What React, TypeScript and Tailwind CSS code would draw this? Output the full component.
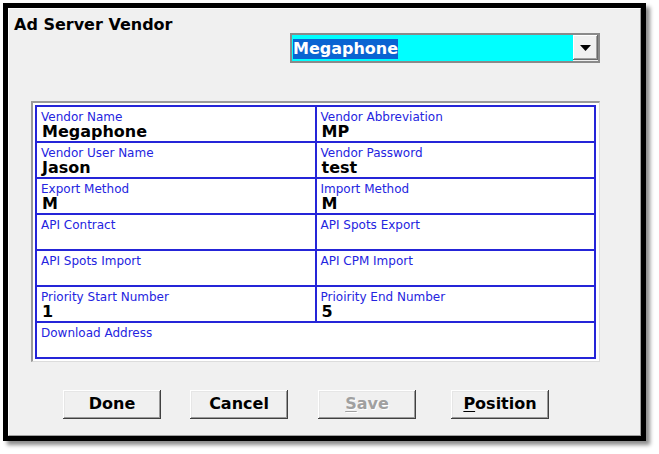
const fields: { label: string; value?: string; wide?: boolean }[] = [
  { label: 'Vendor Name', value: 'Megaphone' },
  { label: 'Vendor Abbreviation', value: 'MP' },
  { label: 'Vendor User Name', value: 'Jason' },
  { label: 'Vendor Password', value: 'test' },
  { label: 'Export Method', value: 'M' },
  { label: 'Import Method', value: 'M' },
  { label: 'API Contract' },
  { label: 'API Spots Export' },
  { label: 'API Spots Import' },
  { label: 'API CPM Import' },
  { label: 'Priority Start Number', value: '1' },
  { label: 'Prioirity End Number', value: '5' },
  { label: 'Download Address', wide: true },
];

const btn =
  "w-[98px] h-[29px] pb-[2px] flex items-center justify-center bg-[#f0f0f0] text-[16px] font-bold leading-[19px] shadow-[inset_-1px_-1px_0_#404040,inset_1px_1px_0_#ffffff,inset_-2px_-2px_0_#9a9a9a,inset_2px_2px_0_#e6e6e6]";

function Field({ label, value, wide }: { label: string; value?: string; wide?: boolean }) {
  return (
    <div className={wide ? 'col-span-2 bg-white h-[34px] pl-[4px] pt-[3px]' : 'bg-white h-[34px] pl-[4px] pt-[3px]'}>
      <div className="text-[12px] leading-[14px] text-[#2424e0]">{label}</div>
      {value && <div className="text-[16px] leading-[15px] font-bold text-black ml-[1px]">{value}</div>}
    </div>
  );
}

export default function App() {
  return (
    <div className="min-h-[454px] bg-white pt-[3px] pl-[3px] font-['DejaVu_Sans',sans-serif]">
      <div className="w-[643px] h-[438px] border-[5px] border-black shadow-[4px_4px_4px_rgba(0,0,0,0.45)]">
        <div className="h-full bg-[#f0f0f0] border-t border-l border-t-white border-l-white border-b border-r border-b-[#a0a0a0] border-r-[#a0a0a0]">
          <div className="pt-[6px] pl-[5px] text-[16px] leading-[19px] font-bold text-black">Ad Server Vendor</div>

          <div className="ml-[281px] mt-[-1px] w-[310px] h-[30px] border-2 border-[#8a8a8a] flex">
            <div className="flex-1 bg-[#00ffff] pl-[1px] pt-[2px]">
              <span className="inline-block bg-[#0a64d2] text-white text-[16px] font-bold leading-[20px]">Megaphone</span>
            </div>
            <div className="w-[25px] h-[25px] bg-[#f0f0f0] flex items-center justify-center shadow-[inset_-1px_-1px_0_#696969,inset_1px_1px_0_#ffffff,inset_-2px_-2px_0_#a0a0a0]">
              <svg width="11" height="6" viewBox="0 0 11 6">
                <polygon points="0,0 11,0 5.5,6" fill="#000" />
              </svg>
            </div>
          </div>

          <div className="ml-[22px] mt-[38px] w-[569px] bg-white border-t-2 border-l-2 border-t-[#9a9a9a] border-l-[#9a9a9a] border-b border-r border-b-[#dcdcdc] border-r-[#dcdcdc] pt-[2px] pl-[2px] pr-[3px] pb-[2px]">
            <div className="grid grid-cols-2 gap-[2px] p-[2px] bg-[#2525d8]">
              {fields.map(f => (
                <Field key={f.label} {...f} />
              ))}
            </div>
          </div>

          <div className="flex pl-[54px] mt-[28px] text-black">
            <div className={btn}>Done</div>
            <div className={btn + ' ml-[29px]'}>Cancel</div>
            <div className={btn + ' ml-[30px] text-[#a0a0a0] [text-shadow:1px_1px_0_#ffffff]'}>
              <span className="underline underline-offset-[2px]">S</span>ave
            </div>
            <div className={btn + ' ml-[35px]'}>
              <span className="underline underline-offset-[2px]">P</span>osition
            </div>
          </div>
        </div>
      </div>
    </div>
  );
}
